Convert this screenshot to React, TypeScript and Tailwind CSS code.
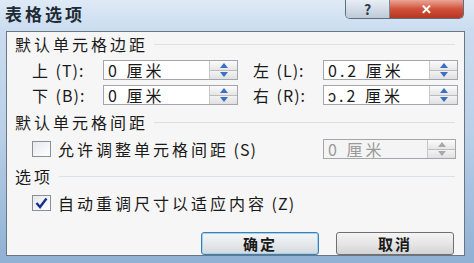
import React from 'react';

const font = { fontFamily: '"Noto Sans CJK SC", "Liberation Sans", sans-serif' };

function Spin({ disabled }: { disabled?: boolean }) {
  const arrow = disabled ? '#a8a8a8' : '#3a6fc4';
  return (
    <div className="flex flex-col w-[28px] h-full border-l border-[#c8c8c8]">
      <div className="flex-1 flex items-center justify-center bg-gradient-to-b from-[#fbfbfb] to-[#e6e6e6] border-b border-[#bcbcbc]">
        <svg width="8" height="5" viewBox="0 0 8 5"><path d="M0 5 L4 0 L8 5 Z" fill={arrow} /></svg>
      </div>
      <div className="flex-1 flex items-center justify-center bg-gradient-to-b from-[#f3f3f3] to-[#e0e0e0]">
        <svg width="8" height="5" viewBox="0 0 8 5"><path d="M0 0 L4 5 L8 0 Z" fill={arrow} /></svg>
      </div>
    </div>
  );
}

function NumInput({ value, width, disabled }: { value: string; width: number; disabled?: boolean }) {
  return (
    <div
      className={`flex h-[20px] border border-[#a3a7ad] ${disabled ? 'bg-[#f4f4f4] text-[#9a9a9a]' : 'bg-white text-[#1a1a1a]'}`}
      style={{ width }}
    >
      <div className="flex-1 flex items-center pl-[4px] text-[16px] tracking-[3px] leading-none">{value}</div>
      <Spin disabled={disabled} />
    </div>
  );
}

function Header({ text }: { text: string }) {
  return (
    <div className="flex items-center h-[20px] pl-[8px] pr-[9px]">
      <span className="text-[16px] tracking-[3px] leading-none text-[#1a1a1a]">{text}</span>
      <div className="flex-1 ml-[6px] border-t border-[#d8e2ea]" />
    </div>
  );
}

function Label({ cjk, key1, width }: { cjk: string; key1: string; width?: number }) {
  return (
    <span className="text-[16px] leading-none text-[#1a1a1a] whitespace-nowrap" style={width ? { width } : undefined}>
      <span className="tracking-[3px]">{cjk}</span>
      <span className="tracking-[1px]"> {key1}</span>
    </span>
  );
}

function CheckBox({ checked }: { checked?: boolean }) {
  return (
    <div className="w-[19px] h-[16px] border border-[#8a8f96] bg-gradient-to-br from-[#e4e8ee] to-[#ffffff] flex items-center justify-center">
      {checked && (
        <svg width="13" height="12" viewBox="0 0 13 12">
          <path d="M1.5 6 L5 10 L11.5 1.5" stroke="#1c2d8c" strokeWidth="2.4" fill="none" />
        </svg>
      )}
    </div>
  );
}

export default function App() {
  return (
    <div
      className="w-[474px] h-[263px] flex flex-col bg-gradient-to-b from-[#cfe0f1] via-[#b9d0e8] to-[#8fb0d4] overflow-hidden"
      style={font}
    >
      <div className="h-[31px] flex items-start justify-between bg-gradient-to-b from-[#dfeaf6] to-[#c9dcef]">
        <span className="mt-[5px] ml-[5px] text-[17px] font-bold tracking-[3px] leading-none text-[#1e2a36]">表格选项</span>
        <div className="flex mr-[10px] h-[19px] rounded-b-[5px] overflow-hidden border border-t-0 border-[#5f6f82]">
          <div className="w-[44px] flex items-center justify-center bg-gradient-to-b from-[#e8eef5] to-[#bfcad8] border-r border-[#7a8898] text-[14px] font-bold text-[#2d3b4d]">?</div>
          <div className="w-[73px] flex items-center justify-center bg-gradient-to-b from-[#e9a596] via-[#d0513a] to-[#b93420] text-[13px] font-bold text-white">✕</div>
        </div>
      </div>
      <div className="ml-[6px] mr-[9px] h-[225px] border border-[#6c7682] bg-[#f6f6f6] flex flex-col pt-[3px]">
        <Header text="默认单元格边距" />
        <div className="flex flex-col gap-[5px] mt-[7px] pl-[25px]">
          <div className="flex items-center gap-[15px]">
            <div className="flex items-center">
              <Label cjk="上" key1="(T):" width={71} />
              <NumInput value="0 厘米" width={135} />
            </div>
            <div className="flex items-center">
              <Label cjk="左" key1="(L):" width={70} />
              <NumInput value="0.2 厘米" width={135} />
            </div>
          </div>
          <div className="flex items-center gap-[15px]">
            <div className="flex items-center">
              <Label cjk="下" key1="(B):" width={71} />
              <NumInput value="0 厘米" width={135} />
            </div>
            <div className="flex items-center">
              <Label cjk="右" key1="(R):" width={70} />
              <NumInput value="ↄ.2 厘米" width={135} />
            </div>
          </div>
        </div>
        <div className="mt-[7px]">
          <Header text="默认单元格间距" />
        </div>
        <div className="flex items-center mt-[5px] pl-[25px] pr-[8px]">
          <CheckBox />
          <span className="ml-[7px]"><Label cjk="允许调整单元格间距" key1="(S)" /></span>
          <div className="flex-1" />
          <NumInput value="0 厘米" width={133} disabled />
        </div>
        <div className="mt-[5px]">
          <Header text="选项" />
        </div>
        <div className="flex items-center mt-[5px] pl-[25px]">
          <CheckBox checked />
          <span className="ml-[7px]"><Label cjk="自动重调尺寸以适应内容" key1="(Z)" /></span>
        </div>
        <div className="flex justify-end gap-[17px] mt-[17px] pr-[10px]">
          <button className="w-[118px] h-[23px] rounded-[3px] border border-[#3c7fb1] bg-gradient-to-b from-[#f4f6f8] via-[#e6e9ec] to-[#d4d8dc] text-[15px] font-bold tracking-[2px] text-[#1a1a1a] leading-none shadow-[inset_0_0_0_1px_#9fd3f0]">确定</button>
          <button className="w-[118px] h-[23px] rounded-[3px] border border-[#707070] bg-gradient-to-b from-[#f4f4f4] via-[#e6e6e6] to-[#d4d4d4] text-[15px] font-bold tracking-[2px] text-[#1a1a1a] leading-none">取消</button>
        </div>
      </div>
    </div>
  );
}
